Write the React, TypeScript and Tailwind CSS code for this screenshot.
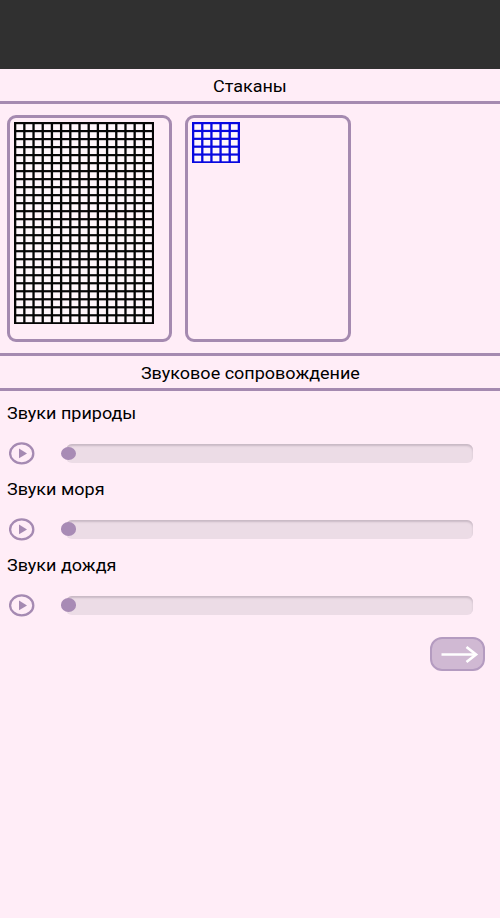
type GridProps = { cols: number; rows: number; width: number; height: number; color: string };

function BeadGrid({ cols, rows, width, height, color }: GridProps) {
  const dx = (width - 2.3) / cols;
  const dy = (height - 2.2) / rows;
  return (
    <svg width={width} height={height} className="block">
      <rect width={width} height={height} fill="#fff6fb" />
      {Array.from({ length: cols + 1 }, (_, i) => (
        <rect key={'c' + i} x={i * dx} y={0} width={2.3} height={height} fill={color} />
      ))}
      {Array.from({ length: rows + 1 }, (_, i) => (
        <rect key={'r' + i} x={0} y={i * dy} width={width} height={2.2} fill={color} />
      ))}
    </svg>
  );
}

function PlayIcon() {
  return (
    <svg width="26" height="23" viewBox="0 0 26 23" className="block shrink-0">
      <ellipse cx="12.7" cy="11.4" rx="11.6" ry="10" fill="none" stroke="#a58ab2" strokeWidth="2.3" />
      <path d="M10 6.5 L18 11.4 L10 16.3 Z" fill="#a58ab2" />
    </svg>
  );
}

function Sound({ label }: { label: string }) {
  return (
    <div className="h-[75.7px]">
      <div className="h-[24px] pl-[6.7px] leading-[24px]">
        <span className="inline-block origin-left scale-x-[1.124]">{label}</span>
      </div>
      <div className="mt-[16px] flex h-[23px] items-center pl-[9px]">
        <PlayIcon />
        <div className="relative ml-[31px] h-[19px] w-[407px] rounded-[6px] bg-[#ecdce6] shadow-[inset_0_2px_2px_#c9b9c5]">
          <div className="absolute top-[2.5px] -left-[5.5px] h-[13.5px] w-[15.5px] rounded-[50%] bg-[#a88bb5]" />
        </div>
      </div>
    </div>
  );
}

export default function App() {
  return (
    <div className="h-[918px] w-[500px] overflow-hidden bg-[#ffedf7] [font-family:Roboto,Inter,'Noto_Sans',sans-serif] text-[16px] text-black">
      <div className="h-[69px] bg-[#303030]" />
      <div className="flex h-[35px] items-center justify-center border-b-[3px] border-[#a58ab0] pt-[4px]">
        <span className="inline-block scale-x-[1.124]">Стаканы</span>
      </div>
      <div className="flex h-[249px] gap-[13px] pt-[11px] pl-[7px]">
        <div className="h-[227px] w-[165px] rounded-[9px] border-[3px] border-[#a58ab0] pt-[3.6px] pl-[4px]">
          <BeadGrid cols={15} rows={25} width={140.2} height={202.4} color="#050505" />
        </div>
        <div className="h-[227px] w-[166px] rounded-[9px] border-[3px] border-[#a58ab0] pt-[3.6px] pl-[4.3px]">
          <BeadGrid cols={5} rows={5} width={48} height={41.5} color="#0808e0" />
        </div>
      </div>
      <div className="flex h-[38px] items-center justify-center border-y-[3px] border-[#a58ab0] pt-[4px]">
        <span className="inline-block scale-x-[1.124]">Звуковое сопровождение</span>
      </div>
      <div className="pt-[11.2px]">
        <Sound label="Звуки природы" />
        <Sound label="Звуки моря" />
        <Sound label="Звуки дождя" />
      </div>
      <div className="flex justify-end pt-[7.7px] pr-[15px]">
        <button className="flex h-[34px] w-[55px] items-center justify-center rounded-[12px] border-2 border-[#b49bc0] bg-[#d0b9d3]">
          <svg width="51" height="30" viewBox="0 0 51 30" fill="none" stroke="#fff" strokeWidth="2.7">
            <path d="M9.5 15.5 H44" />
            <path d="M34.5 8 L44 15.5 L34.5 23" />
          </svg>
        </button>
      </div>
    </div>
  );
}
